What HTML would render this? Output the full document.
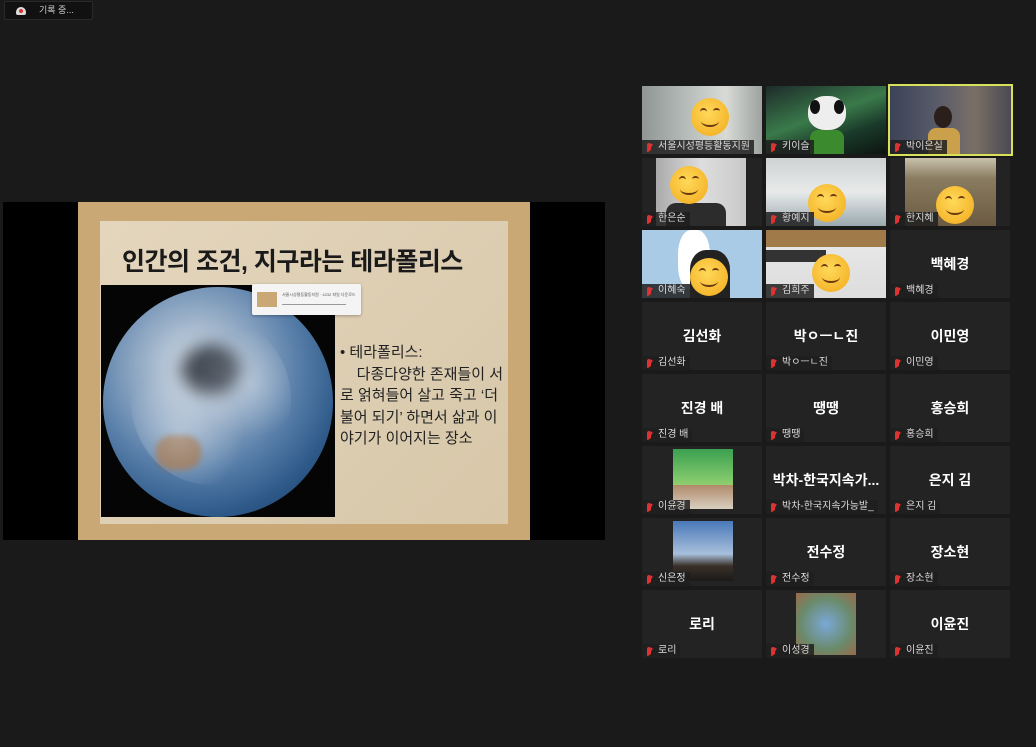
<!DOCTYPE html>
<html><head><meta charset="utf-8">
<style>
*{margin:0;padding:0;box-sizing:border-box}
body{width:1036px;height:747px;background:#1a1a1a;position:relative;overflow:hidden;font-family:"Liberation Sans","Noto Sans CJK KR",sans-serif;color:#fff}
.rec{position:absolute;left:4px;top:1px;width:89px;height:19px;background:#111;border:1px solid #2a2a2a;border-radius:2px;font-size:9px;color:#ccc;line-height:17px;padding-left:34px}
.rec:before{content:"";position:absolute;left:11px;top:5px;width:10px;height:8px;border-radius:5px 5px 2px 2px;background:#ddd}
.rec:after{content:"";position:absolute;left:14px;top:7px;width:4px;height:4px;border-radius:50%;background:#d33}
.t{position:absolute;width:120px;height:68px;background:#232323;overflow:hidden}
.nm{position:absolute;left:0;bottom:0;height:14px;background:rgba(30,30,30,.85);font-size:10px;line-height:14px;padding:0 4px 0 16px;color:#ddd;white-space:nowrap}
.nm:before{content:"";position:absolute;left:5px;top:3px;width:4px;height:8px;border-radius:2px;background:#d33}
.nm:after{content:"";position:absolute;left:3px;top:7px;width:9px;height:1.5px;background:#d33;transform:rotate(-60deg)}
.big{position:absolute;left:0;right:0;top:24px;text-align:center;font-size:14px;font-weight:bold;color:#fff}
.f{position:absolute;width:38px;height:38px;border-radius:50%;background:radial-gradient(circle at 45% 40%,#ffd95a,#f5b52a 75%,#e69a20)}
.f:before{content:"";position:absolute;left:9px;top:10px;width:7px;height:6px;border-top:2px solid #6b3a10;border-radius:50%}
.f:after{content:"";position:absolute;left:10px;top:17px;width:18px;height:10px;border-bottom:2.5px solid #6b3a10;border-radius:0 0 50% 50%}
.e2{position:absolute;left:22px;top:10px;width:7px;height:6px;border-top:2px solid #6b3a10;border-radius:50%}
</style></head><body>
<div class="rec">기록 중...</div>

<div style="position:absolute;left:3px;top:202px;width:602px;height:338px;background:#000"></div>
<div style="position:absolute;left:78px;top:202px;width:452px;height:338px;background:#c9a876"></div>
<div style="position:absolute;left:100px;top:221px;width:408px;height:303px;background:linear-gradient(135deg,#e4d6bd,#dccdb1 60%,#d8c7a8)"></div>
<div style="position:absolute;left:122px;top:242px;font-size:25px;font-weight:bold;color:#1a1a1a;letter-spacing:-0.5px">인간의 조건, 지구라는 테라폴리스</div>
<div style="position:absolute;left:101px;top:285px;width:234px;height:232px;background:#050505;overflow:hidden">
 <div style="position:absolute;left:2px;top:2px;width:230px;height:230px;border-radius:50%;background:radial-gradient(circle at 40% 35%,#d8e0e8 0%,#9ab0c8 25%,#5a80aa 50%,#2e5a8a 72%,#143050 100%)"></div>
 <div style="position:absolute;left:80px;top:60px;width:60px;height:50px;border-radius:50%;background:rgba(10,15,25,.7);filter:blur(8px)"></div>
 <div style="position:absolute;left:55px;top:150px;width:45px;height:35px;border-radius:40%;background:#8a6a50;filter:blur(3px)"></div>
 <div style="position:absolute;left:30px;top:30px;width:160px;height:170px;border-radius:50%;background:radial-gradient(circle at 30% 70%,rgba(255,255,255,.35),transparent 40%),radial-gradient(circle at 75% 40%,rgba(255,255,255,.3),transparent 35%);"></div>
</div>
<div style="position:absolute;left:252px;top:284px;width:109px;height:31px;background:#f4f4f4;border-radius:2px;box-shadow:0 1px 3px rgba(0,0,0,.3)">
 <div style="position:absolute;left:5px;top:8px;width:20px;height:15px;background:#c9a876"></div>
 <div style="position:absolute;left:30px;top:8px;font-size:4px;color:#555">서울시성평등활동지원 · 4232 파일 다운로드</div>
 <div style="position:absolute;left:30px;top:20px;width:64px;height:1px;background:#999"></div>
</div>
<div style="position:absolute;left:340px;top:342px;width:170px;font-size:15px;line-height:21.5px;color:#222">
 • 테라폴리스:<br>&nbsp;&nbsp;&nbsp;&nbsp;다종다양한 존재들이 서로 얽혀들어 살고 죽고 ‘더불어 되기’ 하면서 삶과 이야기가 이어지는 장소
</div>

<div class="t" style="left:642px;top:86px;background:linear-gradient(90deg,#8f9693,#c4c9c6 50%,#d8dad6 70%,#9ea39f)"><div class="f" style="left:49px;top:12px"><div class="e2"></div></div><div class="nm">서울시성평등활동지원</div></div>
<div class="t" style="left:766px;top:86px;background:linear-gradient(160deg,#1d2b2a,#3a7a4a 45%,#1a3a2a 70%,#0c1410)">
 <div style="position:absolute;left:42px;top:10px;width:38px;height:34px;border-radius:45%;background:#eee"></div>
 <div style="position:absolute;left:44px;top:14px;width:10px;height:14px;border-radius:50%;background:#111"></div>
 <div style="position:absolute;left:68px;top:14px;width:10px;height:14px;border-radius:50%;background:#111"></div>
 <div style="position:absolute;left:44px;top:44px;width:34px;height:24px;border-radius:8px 8px 0 0;background:#3c8a2e"></div>
 <div class="nm">키이슬</div></div>
<div class="t" style="left:888px;top:84px;width:125px;height:72px;border:2px solid #d7e25a;background:linear-gradient(90deg,#3b4356,#5a5c6a 40%,#7a6f66 70%,#4a4a52)">
 <div style="position:absolute;left:44px;top:20px;width:18px;height:22px;border-radius:50%;background:#2a1f1a"></div>
 <div style="position:absolute;left:38px;top:42px;width:32px;height:26px;border-radius:8px 8px 0 0;background:#caa04a"></div>
 <div class="nm">박이은실</div></div>
<div class="t" style="left:642px;top:158px;background:#232323"><div style="position:absolute;left:14px;top:0;width:90px;height:68px;background:linear-gradient(90deg,#aaa,#ddd 50%,#c9c9c9)"></div><div style="position:absolute;left:24px;top:45px;width:60px;height:23px;background:#2c2c2c;border-radius:10px 10px 0 0"></div><div class="f" style="left:28px;top:8px"><div class="e2"></div></div><div class="nm">한은순</div></div>
<div class="t" style="left:766px;top:158px;background:linear-gradient(180deg,#cfd2d3,#e8eaea 50%,#9aa9b0)"><div class="f" style="left:42px;top:26px"><div class="e2"></div></div><div class="nm">황예지</div></div>
<div class="t" style="left:890px;top:158px;background:#232323"><div style="position:absolute;left:15px;top:0;width:91px;height:68px;background:linear-gradient(180deg,#c9c2ac,#8a7c60 30%,#6b5a42)"></div><div class="f" style="left:46px;top:28px"><div class="e2"></div></div><div class="nm">한지혜</div></div>
<div class="t" style="left:642px;top:230px;background:#aacbe6"><div style="position:absolute;left:36px;top:0;width:32px;height:60px;background:#fff;border-radius:40%"></div><div style="position:absolute;left:48px;top:20px;width:40px;height:48px;background:#222;border-radius:40% 40% 0 0"></div><div class="f" style="left:48px;top:28px"><div class="e2"></div></div><div class="nm">이혜숙</div></div>
<div class="t" style="left:766px;top:230px;background:linear-gradient(180deg,#a07a48 0,#a07a48 25%,#e6e6e6 25%,#ddd)"><div style="position:absolute;left:0;top:20px;width:60px;height:12px;background:#333"></div><div class="f" style="left:46px;top:24px"><div class="e2"></div></div><div class="nm">김희주</div></div>
<div class="t" style="left:890px;top:230px"><div class="big">백혜경</div><div class="nm">백혜경</div></div>
<div class="t" style="left:642px;top:302px"><div class="big">김선화</div><div class="nm">김선화</div></div>
<div class="t" style="left:766px;top:302px"><div class="big">박ㅇㅡㄴ진</div><div class="nm">박ㅇㅡㄴ진</div></div>
<div class="t" style="left:890px;top:302px"><div class="big">이민영</div><div class="nm">이민영</div></div>
<div class="t" style="left:642px;top:374px"><div class="big">진경 배</div><div class="nm">진경 배</div></div>
<div class="t" style="left:766px;top:374px"><div class="big">땡땡</div><div class="nm">땡땡</div></div>
<div class="t" style="left:890px;top:374px"><div class="big">홍승희</div><div class="nm">홍승희</div></div>
<div class="t" style="left:642px;top:446px"><div style="position:absolute;left:31px;top:3px;width:60px;height:60px;background:linear-gradient(180deg,#3aa050,#8fcf70 60%,#b08a6a 60%,#d8cfc0)"></div><div class="nm">이윤경</div></div>
<div class="t" style="left:766px;top:446px"><div class="big">박차-한국지속가...</div><div class="nm">박차-한국지속가능발_</div></div>
<div class="t" style="left:890px;top:446px"><div class="big">은지 김</div><div class="nm">은지 김</div></div>
<div class="t" style="left:642px;top:518px"><div style="position:absolute;left:31px;top:3px;width:60px;height:60px;background:linear-gradient(180deg,#4a78b8,#a8c0dc 55%,#3a3028 75%,#1a1a1a)"></div><div class="nm">신은정</div></div>
<div class="t" style="left:766px;top:518px"><div class="big">전수정</div><div class="nm">전수정</div></div>
<div class="t" style="left:890px;top:518px"><div class="big">장소현</div><div class="nm">장소현</div></div>
<div class="t" style="left:642px;top:590px"><div class="big">로리</div><div class="nm">로리</div></div>
<div class="t" style="left:766px;top:590px"><div style="position:absolute;left:30px;top:3px;width:60px;height:62px;background:radial-gradient(circle at 50% 50%,#7aa8d8,#6a8a6a 60%,#9a6a4a)"></div><div class="nm">이성경</div></div>
<div class="t" style="left:890px;top:590px"><div class="big">이윤진</div><div class="nm">이윤진</div></div>
</body></html>
